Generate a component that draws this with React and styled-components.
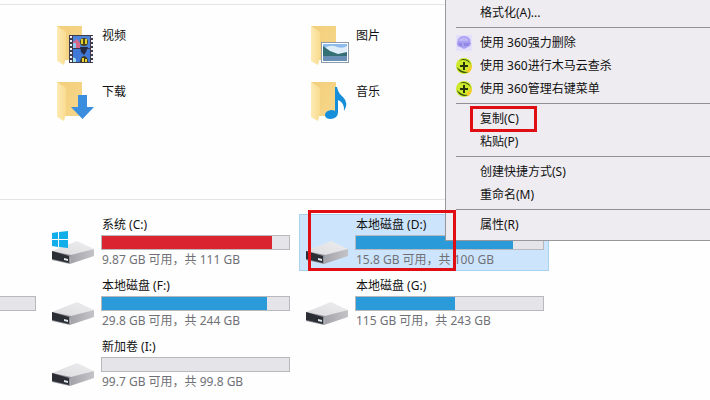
import React, { useState } from 'react'
import styled, { createGlobalStyle } from 'styled-components'

const folders = [
    { name: "视频", kind: "video" },
    { name: "图片", kind: "picture" },
    { name: "下载", kind: "download" },
    { name: "音乐", kind: "music" },
]

const drives = [
    { name: "系统 (C:)", info: "9.87 GB 可用，共 111 GB", used: 91, column: 2, row: 1, system: true, full: true },
    { name: "本地磁盘 (D:)", info: "15.8 GB 可用，共 100 GB", used: 84, column: 3, row: 1, marked: true },
    { name: "本地磁盘 (F:)", info: "29.8 GB 可用，共 244 GB", used: 88, column: 2, row: 2 },
    { name: "本地磁盘 (G:)", info: "115 GB 可用，共 243 GB", used: 53, column: 3, row: 2 },
    { name: "新加卷 (I:)", info: "99.7 GB 可用，共 99.8 GB", used: 0, column: 2, row: 3 },
]

const menu = [
    [{ text: "格式化(A)..." }],
    [
        { text: "使用 360强力删除", icon: "shred" },
        { text: "使用 360进行木马云查杀", icon: "safe" },
        { text: "使用 360管理右键菜单", icon: "safe" },
    ],
    [{ text: "复制(C)", marked: true }, { text: "粘贴(P)" }],
    [{ text: "创建快捷方式(S)" }, { text: "重命名(M)" }],
    [{ text: "属性(R)" }],
]

function FolderIcon({ kind }) {
    return (
      <Icon viewBox="0 0 48 48" aria-hidden="true">
        <defs>
          <linearGradient id="folderBack" x1="0" y1="0" x2="1" y2="1">
            <stop offset="0" stopColor="#f3cf7c" />
            <stop offset="1" stopColor="#f5d68a" />
          </linearGradient>
          <linearGradient id="folderFlap" x1="0" y1="0" x2="1" y2="0">
            <stop offset="0" stopColor="#fdeab4" />
            <stop offset="1" stopColor="#f8dc90" />
          </linearGradient>
        </defs>
        <path d="M8 4H33V38H14Z" fill="url(#folderBack)" />
        <path d="M8 4L17 10V35L15 43L8 39Z" fill="url(#folderFlap)" />
        {kind === "video" && (
          <g>
            <rect x="20" y="13" width="24" height="28" fill="#3d3b4c" />
            <rect x="24" y="14" width="17" height="12" fill="#4f83d8" />
            <rect x="24" y="27" width="17" height="13" fill="#3f78d6" />
            <path d="M22 14V41M43 14V41" stroke="#f4f1f4" strokeWidth="2" strokeDasharray="2 2" />
            <path d="M24 20L28 17L31 21V26H24Z" fill="#d7698d" />
            <path d="M24 21H27V26H24Z" fill="#8fc7ee" />
            <circle cx="35" cy="20" r="4" fill="#4b471a" />
            <path d="M32 17H34V22H32ZM36 17H38V22H36Z" fill="#e3d02f" />
            <path d="M31 25H39L37 30L35 33L32 30Z" fill="#262b45" />
            <path d="M31 40Q32 34 35 34Q39 35 39 40Z" fill="#40391c" />
            <path d="M33 36H35V40H33ZM36 37H38V40H36Z" fill="#e6ce35" />
            <path d="M24 35L27 37V40H24Z" fill="#9edcf0" />
          </g>
        )}
        {kind === "picture" && (
          <g>
            <rect x="18" y="20" width="28" height="21" fill="#8d9aaa" />
            <rect x="19" y="21" width="26" height="19" fill="#fff" />
            <rect x="20" y="22" width="24" height="17" fill="#8dbcec" />
            <path d="M22 26Q28 22 34 25Q40 27 44 24V32H20V28Z" fill="#dfedf9" />
            <path d="M20 24L27 29L35 32L44 30V34H20Z" fill="#356f76" />
            <rect x="20" y="34" width="24" height="5" fill="#6a8fb4" />
          </g>
        )}
        {kind === "download" && (
          <path d="M29 17H38V29H45L33.500 41L22 29H29Z" fill="#3b8ede" />
        )}
        {kind === "music" && (
          <path d="M32 9H34Q35 15 40 19Q46 25 41 33Q42 25 35 22V34Q35 40 28 41Q22 41 22 37Q22 33 28 32Q31 32 32 33Z" fill="#168fdb" />
        )}
      </Icon>
    )
}

function DriveIcon({ system }) {
    return (
      <Icon viewBox="0 0 48 48" aria-hidden="true">
        <defs>
          <linearGradient id="driveTop" x1="0" y1="1" x2="1" y2="0">
            <stop offset="0" stopColor="#dcdcdf" />
            <stop offset="1" stopColor="#ededef" />
          </linearGradient>
          <linearGradient id="driveSide" x1="0" y1="0" x2="1" y2="0">
            <stop offset="0" stopColor="#a2a2a9" />
            <stop offset="1" stopColor="#c4c4c8" />
          </linearGradient>
        </defs>
        <path d="M3 32L28 22L45 30L22 37Z" fill="url(#driveTop)" />
        <path d="M22 36L45 30V37L21 45Z" fill="url(#driveSide)" />
        <path d="M3 32L22 36L21 45L3 41Z" fill="#8f9097" />
        <path d="M3 32L20 37V44L3 40Z" fill="#2c2e35" />
        <path d="M15 39L19 40V42L15 41Z" fill="#dfe8ea" />
        {system && (
          <path d="M3 14L9 13V20H3ZM10 13L19 12V20H10ZM3 21H9V28L3 27ZM10 21H19V29L10 28Z" fill="#12aeea" />
        )}
      </Icon>
    )
}

function MenuIcon({ kind }) {
    if (kind === "shred") {
        return (
          <SmallIcon viewBox="0 0 16 16" aria-hidden="true">
            <rect width="16" height="16" fill="#e4dffa" />
            <path d="M2 4Q4 1 8 1Q12 1 14 4L15 9Q14 12 12 12L8 14L4 12Q1 12 1 8Z" fill="#a9a0f2" />
            <path d="M3 4Q8 1 12 4V6H3Z" fill="#beb8f7" />
            <path d="M2 8H6V11H3ZM8 8H14L12 11H8Z" fill="#9389e4" />
          </SmallIcon>
        )
    }
    return (
      <SmallIcon viewBox="0 0 16 16" aria-hidden="true">
        <circle cx="8" cy="8" r="8" fill="#cde92c" />
        <path d="M15 6Q17 12 12 15L10 13L13 10Z" fill="#f8c92a" />
        <path d="M3 3Q7 -1 13 3L15 7Q12 2 7 2Q4 2 3 3Z" fill="#35510e" />
        <path d="M1 9Q2 14 8 15Q11 15 12 14Q5 14 1 9Z" fill="#35510e" />
        <path d="M8 4V12M4 8H12" stroke="#28350c" strokeWidth="2" />
      </SmallIcon>
    )
}

function App() {
    const [selected, setSelected] = useState("本地磁盘 (D:)");

  return (
    <Page>
      <GlobalStyle />
      <FolderGrid>
        {folders.map((folder)=>(
            <FolderTile key={folder.name}>
                <FolderIcon kind={folder.kind} />
                <FolderName>{folder.name}</FolderName>
            </FolderTile>
        ))}
      </FolderGrid>

      <DriveGrid>
        <EdgeTile>
            <Bar $cut />
        </EdgeTile>
        {drives.map((drive)=>(
            <DriveTile
            key={drive.name}
            $column={drive.column}
            $row={drive.row}
            $selected={drive.name === selected}
            onClick={() => setSelected(drive.name)}
            >
                <DriveIcon system={drive.system} />
                <DriveBody>
                    <Name>{drive.name}</Name>
                    <Bar>
                        <Fill $full={drive.full} style={{ width: `${drive.used}%` }} />
                    </Bar>
                    <Info>{drive.info}</Info>
                </DriveBody>
                {drive.marked && <DriveMark />}
            </DriveTile>
        ))}
      </DriveGrid>

      <Menu role="menu">
        {menu.map((group, index)=>(
            <MenuGroup key={index}>
                {group.map((item)=>(
                    <MenuItem key={item.text} role="menuitem" type="button">
                        <IconSlot>{item.icon && <MenuIcon kind={item.icon} />}</IconSlot>
                        {item.text}
                        {item.marked && <ItemMark />}
                    </MenuItem>
                ))}
            </MenuGroup>
        ))}
      </Menu>
    </Page>
  )
}

export default App

const GlobalStyle = createGlobalStyle`
* {
    box-sizing: border-box;
}
body {
    margin: 0;
    background: #fefefe;
    font-family: "Noto Sans", "Noto Sans CJK SC", sans-serif;
    font-size: 12px;
    line-height: 18px;
    color: #111;
}
`

const Page = styled.main`
    position: relative;
    min-height: 100vh;
    padding-top: 4px;
    overflow: hidden;
`

const Grid = styled.section`
    display: grid;
    grid-template-columns: 41px 250px 250px;
    column-gap: 4px;
    border-top: 1px solid #e4e4e6;
`

const FolderGrid = styled(Grid)`
    grid-auto-rows: 56px;
    padding: 13px 0 69px;
`

const DriveGrid = styled(Grid)`
    row-gap: 4px;
    padding: 14px 0;
`

const FolderTile = styled.div`
    display: flex;
    align-items: center;
    gap: 4px;
    padding: 0 4px;

    &:nth-child(odd) {
        grid-column: 2;
    }
`

const FolderName = styled.span`
    align-self: flex-start;
    padding: 9px 0 0 1px;
`

const EdgeTile = styled.div`
    grid-row: 2;
    padding: 21px 5px 0 0;
`

const DriveTile = styled.button`
    position: relative;
    display: flex;
    align-items: center;
    gap: 4px;
    grid-column: ${(props) => props.$column};
    grid-row: ${(props) => props.$row};
    padding: 2px 5px 2px 4px;
    border: none;
    background: ${(props) => (props.$selected ? '#cde5fc' : 'transparent')};
    box-shadow: ${(props) => (props.$selected ? 'inset 0 0 0 1px #a9d2ee' : 'none')};
    font: inherit;
    color: inherit;
    text-align: left;
`

const DriveBody = styled.span`
    display: flex;
    flex: 1;
    flex-direction: column;
    gap: 1px;
`

const Name = styled.span`
    padding-left: 1px;
    white-space: nowrap;
`

const Info = styled(Name)`
    color: #707176;
`

const Bar = styled.span`
    display: block;
    height: 15px;
    border: 1px solid #b9b9bd;
    border-left-width: ${(props) => (props.$cut ? '0' : '1px')};
    background: #e5e4e9;
`

const Fill = styled.span`
    display: block;
    height: 100%;
    background: ${(props) => (props.$full ? '#da2430' : '#2a9ad8')};
`

const Icon = styled.svg`
    flex: none;
    width: 48px;
    height: 48px;
`

const SmallIcon = styled.svg`
    display: block;
    width: 16px;
    height: 16px;
`

const Menu = styled.div`
    position: absolute;
    top: 0;
    left: 445px;
    right: 0;
    z-index: 1;
    padding: 1px 0 4px;
    border-left: 1px solid #98989c;
    border-bottom: 1px solid #98989c;
    background: #eeecf0;
`

const MenuGroup = styled.div`
    & + &::before {
        content: "";
        display: block;
        height: 1px;
        margin: 3px 0 3px 10px;
        background: #919195;
    }
`

const MenuItem = styled.button`
    position: relative;
    display: flex;
    align-items: center;
    gap: 8px;
    width: 100%;
    height: 23px;
    padding: 0 10px;
    border: none;
    background: transparent;
    font: inherit;
    color: inherit;
    white-space: nowrap;
`

const IconSlot = styled.span`
    width: 16px;
`

const Mark = styled.span`
    position: absolute;
    z-index: 2;
    border: 3px solid #e00d12;
    pointer-events: none;
`

const DriveMark = styled(Mark)`
    top: -4px;
    left: 9px;
    width: 148px;
    height: 61px;
`

const ItemMark = styled(Mark)`
    top: -1px;
    left: 24px;
    width: 67px;
    height: 26px;
`
